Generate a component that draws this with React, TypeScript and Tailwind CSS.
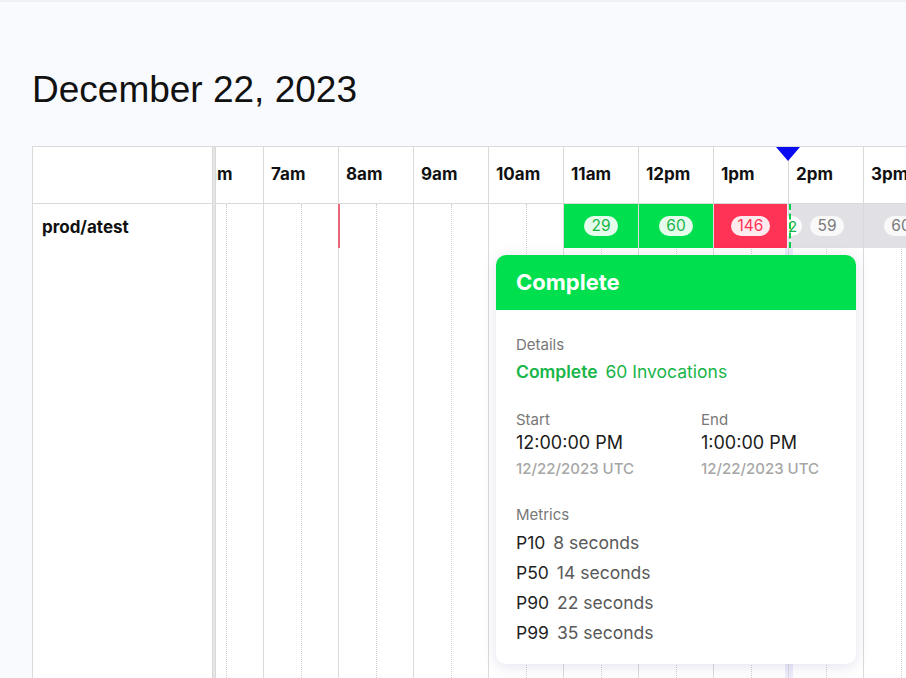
type Bar = {
  bg: string;
  pill: string;
  pillText: string;
  text: string;
};

type Column = {
  label: string;
  bar?: Bar;
  marker?: boolean;
  running?: boolean;
};

const green: Omit<Bar, "text"> = {
  bg: "bg-[#00e04f]",
  pill: "bg-white/90",
  pillText: "text-[#17b548]",
};
const red: Omit<Bar, "text"> = {
  bg: "bg-[#ff3355]",
  pill: "bg-white/90",
  pillText: "text-[#ff3355]",
};
const gray: Omit<Bar, "text"> = {
  bg: "bg-[#e1e1e5]",
  pill: "bg-white/80",
  pillText: "text-[#7a7a7a]",
};

const columns: Column[] = [
  { label: "6am" },
  { label: "7am" },
  { label: "8am", marker: true },
  { label: "9am" },
  { label: "10am" },
  { label: "11am", bar: { ...green, text: "29" } },
  { label: "12pm", bar: { ...green, text: "60" } },
  { label: "1pm", bar: { ...red, text: "146" } },
  { label: "2pm", bar: { ...gray, text: "59" }, running: true },
  { label: "3pm", bar: { ...gray, text: "60" } },
  { label: "4pm" },
];

function Pill({ bar }: { bar: Bar }) {
  return (
    <span
      className={`inline-flex h-[20px] items-center rounded-full px-[7px] text-[15.5px] leading-none ${bar.pill} ${bar.pillText}`}
    >
      {bar.text}
    </span>
  );
}

function HourColumn({ col }: { col: Column }) {
  return (
    <div className="relative flex w-[75px] shrink-0 flex-col border-l border-[#dadada]">
      <div className="flex h-[57px] items-center border-b border-[#dadada] pb-[1px] pl-[7px] text-[17px] font-bold text-[#111]">
        {col.label}
      </div>
      <div className="relative flex flex-1">
        <div className="w-[38px] border-r border-dotted border-[#cfcfcf]" />
        <div className="flex-1" />
        {col.bar && !col.running && (
          <div
            className={`absolute left-0 top-0 flex h-[44px] items-center justify-center ${
              col.bar.bg
            } ${col.label === "1pm" ? "right-[1px]" : "right-0"}`}
          >
            <Pill bar={col.bar} />
          </div>
        )}
        {col.bar && col.running && (
          <div className="absolute inset-x-0 top-0 h-[44px]">
            <div
              className={`absolute bottom-0 left-[2px] right-0 top-0 flex items-center justify-center ${col.bar.bg}`}
            >
              <Pill bar={col.bar} />
            </div>
            <span className="absolute left-[-2px] top-[12px] inline-flex h-[20px] items-center rounded-r-full bg-white/90 pl-[1px] pr-[5px] text-[15px] leading-none text-[#17b548]">
              2
            </span>
            <div className="absolute bottom-0 left-0 top-0 border-l-2 border-dashed border-[#00d34a]" />
          </div>
        )}
      </div>
      {col.marker && (
        <div className="absolute left-[-1px] top-[57px] h-[44px] w-[2px] bg-[#e8687a]" />
      )}
    </div>
  );
}

function Popover() {
  return (
    <div className="absolute left-[463px] top-[108px] z-20 w-[360px] overflow-hidden rounded-[10px] bg-white shadow-[0_2px_14px_rgba(70,70,140,0.16)]">
      <div className="flex h-[55px] items-center bg-[#00e04f] px-5 text-[22px] font-bold text-white">
        Complete
      </div>
      <div className="px-5 pb-[16px] pt-[25px]">
        <div className="text-[15px] leading-[20px] text-[#787878]">Details</div>
        <div className="mt-[5px] text-[17.5px] leading-[24px] text-[#18b548]">
          <span className="font-semibold">Complete</span>
          <span className="ml-2">60 Invocations</span>
        </div>

        <div className="mt-[26px] grid grid-cols-[185px_1fr]">
          <div>
            <div className="text-[15px] leading-[20px] text-[#787878]">Start</div>
            <div className="mt-[1px] text-[18px] leading-[24px] text-[#1c1c1c]">12:00:00 PM</div>
            <div className="mt-[4px] text-[15px] font-medium leading-[20px] text-[#a6a6a6]">
              12/22/2023 UTC
            </div>
          </div>
          <div>
            <div className="text-[15px] leading-[20px] text-[#787878]">End</div>
            <div className="mt-[1px] text-[18px] leading-[24px] text-[#1c1c1c]">1:00:00 PM</div>
            <div className="mt-[4px] text-[15px] font-medium leading-[20px] text-[#a6a6a6]">
              12/22/2023 UTC
            </div>
          </div>
        </div>

        <div className="mt-[26px] text-[15px] leading-[20px] text-[#787878]">Metrics</div>
        <div className="mt-[3px] text-[17.5px] leading-[30px]">
          {[
            ["P10", "8 seconds"],
            ["P50", "14 seconds"],
            ["P90", "22 seconds"],
            ["P99", "35 seconds"],
          ].map(([k, v]) => (
            <div key={k}>
              <span className="text-[#1f1f1f]">{k}</span>
              <span className="ml-[8px] text-[#5a5a5a]">{v}</span>
            </div>
          ))}
        </div>
      </div>
    </div>
  );
}

export default function App() {
  return (
    <div
      className="min-h-screen overflow-hidden border-t-2 border-[#efeff4] bg-[#f9fafe] pt-[66px]"
      style={{ fontFamily: "Inter, 'Noto Sans', sans-serif" }}
    >
      <h1
        className="pl-8 text-[37px] font-normal leading-[44px] text-[#111]"
        style={{ fontFamily: "'Liberation Sans', Arial, sans-serif" }}
      >
        December 22, 2023
      </h1>

      <div className="relative ml-8 mt-[34px] flex h-[560px] border-l border-t border-[#dadada] bg-white">
        {/* names */}
        <div className="flex w-[179px] shrink-0 flex-col">
          <div className="h-[57px] border-b border-[#dadada]" />
          <div className="flex h-[44px] items-center pl-[9px] pt-[3px] text-[17px] font-bold text-[#111]">
            prod/atest
          </div>
        </div>
        <div className="w-[4px] shrink-0 border-x border-[#d9d9d9] bg-[#e6e6e6]" />

        {/* timeline */}
        <div className="relative flex-1 overflow-hidden">
          <div className="absolute bottom-0 left-[569px] top-[57px] w-[8px] bg-[rgba(70,70,220,0.1)]" />
          <div className="-ml-[28px] flex h-full">
            {columns.map((c) => (
              <HourColumn key={c.label} col={c} />
            ))}
          </div>
          <svg
            className="absolute left-[560px] top-0 z-10"
            width="24"
            height="14"
            viewBox="0 0 24 14"
          >
            <polygon points="0,0 24,0 12,14" fill="#0a0af0" />
          </svg>
        </div>

        <Popover />
      </div>
    </div>
  );
}
